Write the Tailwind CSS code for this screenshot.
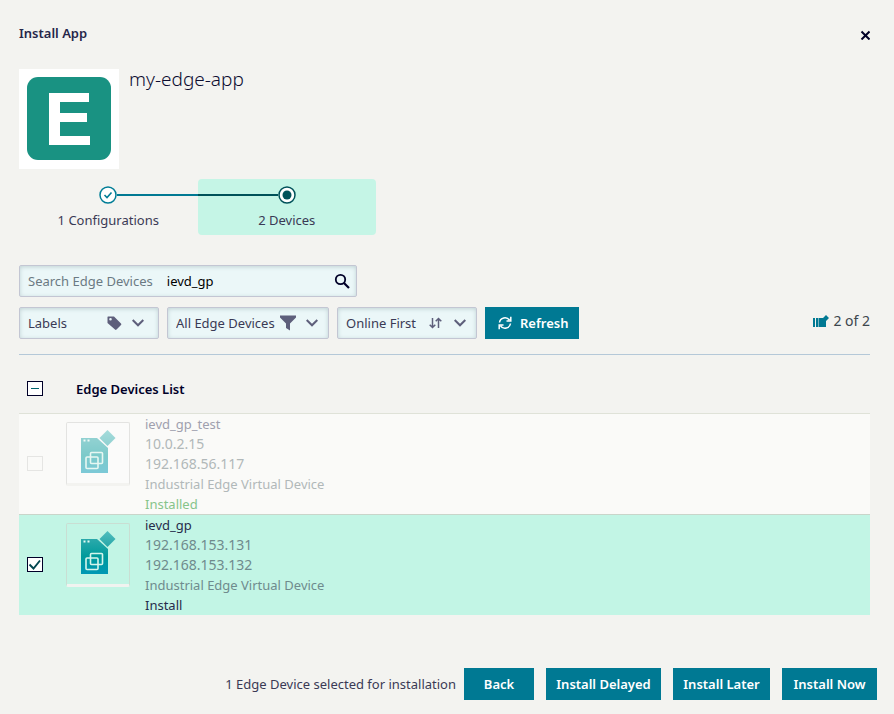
<!DOCTYPE html>
<html lang="en">
<head>
<meta charset="utf-8">
<meta name="viewport" content="width=device-width, initial-scale=1">
<title>Install App</title>
<script src="https://cdn.jsdelivr.net/npm/@tailwindcss/browser@4"></script>
</head>
<body class="min-h-screen bg-[#f3f3f0] font-['Noto_Sans',sans-serif] text-[13px] leading-5 text-[#3a3a55]">
<svg class="absolute size-0" aria-hidden="true">
  <defs>
    <linearGradient id="teal" x1="0" y1="0" x2="0" y2="1">
      <stop offset="0" stop-color="#2ba9ab"/><stop offset=".5" stop-color="#009a9b"/><stop offset="1" stop-color="#0098b5"/>
    </linearGradient>
    <linearGradient id="tip" x1="0" y1="0" x2="0" y2="1">
      <stop offset="0" stop-color="#50bebe"/><stop offset="1" stop-color="#27a6a8"/>
    </linearGradient>
    <symbol id="chevron" viewBox="0 0 12 8"><path d="M.700 1l5.300 5.300L11.300 1" fill="none" stroke="#5e5f7b" stroke-width="2"/></symbol>
    <symbol id="device" viewBox="0 0 36 44">
      <path d="M1 8h16l11 10v25H1z" fill="url(#teal)"/>
      <path d="M27.500 0l8 8-8 8-8-8z" fill="url(#tip)"/>
      <path d="M3.500 9.500h2v2h-2zM7.500 9.500h2v2h-2z" fill="#e6faf4"/>
      <g fill="none" stroke="#d5f5ec" stroke-width="1.600"><rect x="10.500" y="22.500" width="12" height="11" rx="1"/><rect x="6" y="27" width="12" height="11.500" rx="1"/></g>
    </symbol>
  </defs>
</svg>
<main class="flex min-h-screen flex-col">
  <div class="pl-[19px] pr-6">
    <header class="flex items-center justify-between pt-[23px]">
      <h1 class="font-semibold text-[#26264a]">Install App</h1>
      <button type="button" aria-label="Close" class="mt-1 flex size-[10px]"><svg class="size-[10px]" viewBox="0 0 10 10"><path d="M1.500 1.500l8 8M9.500 1.500l-8 8" stroke="#000028" stroke-width="2"/></svg></button>
    </header>

    <section class="mt-[26px] flex items-start gap-[10px]">
      <div class="size-[100px] bg-white p-2">
        <div class="flex h-[83px] w-[84px] items-center justify-center rounded-[11px] bg-[#199282]">
          <svg class="h-[52px] w-[42px]" viewBox="0 0 42 52" role="img" aria-label="App logo"><rect x="1" width="11" height="52" fill="#fff"/><rect x="1" width="40" height="9" fill="#fff"/><rect x="1" y="20" width="38" height="9" fill="#fff"/><rect x="1" y="43" width="41" height="9" fill="#fff"/></svg>
        </div>
      </div>
      <h2 class="text-[19px] leading-5 font-light text-[#0c0c30]">my-edge-app</h2>
    </section>

    <ol class="mt-[10px] grid w-[357px] grid-cols-2 text-center">
      <li class="pt-[7px] pb-[5px]">
        <div class="grid grid-cols-[1fr_18px_1fr] items-center">
          <span></span>
          <svg class="size-[18px]" viewBox="0 0 18 18"><circle cx="9" cy="9" r="8" fill="#fff" stroke="#007d96" stroke-width="1.500"/><path d="M5.500 9l2.500 2.500 4.500-5" fill="none" stroke="#007d96" stroke-width="1.600"/></svg>
          <span class="h-[2px] bg-[#007993]"></span>
        </div>
        <span class="mt-[6px] block">1 Configurations</span>
      </li>
      <li class="rounded-[4px] bg-[#c5f5e6] pt-[7px] pb-[5px]">
        <div class="grid grid-cols-[1fr_18px_1fr] items-center">
          <span class="h-[2px] bg-[#005159]"></span>
          <svg class="size-[18px]" viewBox="0 0 18 18"><circle cx="9" cy="9" r="8" fill="#fff" stroke="#005159" stroke-width="1.500"/><circle cx="9" cy="9" r="4.500" fill="#005159"/></svg>
        </div>
        <span class="mt-[6px] block">2 Devices</span>
      </li>
    </ol>

    <form class="mt-[30px] border-b border-[#b4c8d8] pb-[15px]" onsubmit="return false">
      <div class="flex h-8 w-[338px] items-center rounded-[2px] border border-[#c3c6d3] bg-[#ebf7f8] pr-[6px] pl-2 shadow-[inset_0_1px_4px_#bfd2d4]">
        <label for="search" class="shrink-0 text-[#6b7a83]">Search Edge Devices</label>
        <input id="search" type="text" value="ievd_gp" class="ml-[14px] min-w-0 flex-1 bg-transparent text-black outline-none">
        <button type="submit" aria-label="Search" class="shrink-0"><svg class="size-4" viewBox="0 0 16 16"><circle cx="6.500" cy="6.500" r="4.700" fill="none" stroke="#000028" stroke-width="1.800"/><path d="M10 10l5 5" stroke="#000028" stroke-width="2.200"/></svg></button>
      </div>
      <div class="mt-[10px] flex items-center gap-2">
        <div class="grid h-8 w-[140px] items-center">
          <select aria-label="Labels" class="h-8 w-full appearance-none rounded-[2px] border border-[#c3c6d3] bg-[#ebf7f8] pl-2 shadow-[inset_0_1px_4px_#bfd2d4] [grid-area:1/1]"><option>Labels</option></select>
          <span class="pointer-events-none flex items-center gap-[10px] justify-self-end pr-[15px] [grid-area:1/1]">
            <svg class="size-4" viewBox="0 0 16 16"><path fill="#5e5f7b" fill-rule="evenodd" d="M2 1.500h6L15 8.500q.8.800 0 1.500l-4.500 4.500q-.8.800-1.500 0L1.500 8V2q0-.5.500-.5zM4.500 3a1.300 1.300 0 1 0 0 2.600 1.300 1.300 0 0 0 0-2.600z"/></svg>
            <svg class="h-2 w-3"><use href="#chevron"/></svg>
          </span>
        </div>
        <div class="grid h-8 w-[162px] items-center">
          <select aria-label="Device filter" class="h-8 w-full appearance-none rounded-[2px] border border-[#c3c6d3] bg-[#ebf7f8] pl-2 shadow-[inset_0_1px_4px_#bfd2d4] [grid-area:1/1]"><option>All Edge Devices</option></select>
          <span class="pointer-events-none flex items-center gap-[10px] justify-self-end pr-[11px] [grid-area:1/1]">
            <svg class="size-4" viewBox="0 0 16 16"><path fill="#5e5f7b" d="M0 .5h16v2l-6 6V15.500l-4-2.500V8.500l-6-6z"/></svg>
            <svg class="h-2 w-3"><use href="#chevron"/></svg>
          </span>
        </div>
        <div class="grid h-8 w-[140px] items-center">
          <select aria-label="Sort order" class="h-8 w-full appearance-none rounded-[2px] border border-[#c3c6d3] bg-[#ebf7f8] pl-2 shadow-[inset_0_1px_4px_#bfd2d4] [grid-area:1/1]"><option>Online First</option></select>
          <span class="pointer-events-none flex items-center gap-3 justify-self-end pr-[11px] [grid-area:1/1]">
            <svg class="h-3 w-[13px]" viewBox="0 0 13 12"><path d="M3.500 1v9.500M.7 7.700l2.800 2.800 2.800-2.800M9.500 11V1.500M6.700 4.300l2.800-2.800 2.800 2.800" fill="none" stroke="#5e5f7b" stroke-width="1.500"/></svg>
            <svg class="h-2 w-3"><use href="#chevron"/></svg>
          </span>
        </div>
        <button type="button" class="flex h-8 w-[94px] items-center gap-2 bg-[#007993] pl-[13px] font-semibold text-white">
          <svg class="size-[14px]" viewBox="0 0 14 14"><path d="M1.500 6.500a5.500 5.500 0 0 1 10-2.300M12.500 7.500a5.500 5.500 0 0 1-10 2.300M12.800.8v4.300H8.500M1.200 13.200V8.900h4.300" fill="none" stroke="#fff" stroke-width="1.500"/></svg>Refresh</button>
        <div class="ml-auto flex items-center gap-1 pb-1 text-[14px] leading-5 text-[#3c464d]">
          <svg class="h-[12px] w-4" viewBox="0 0 16 12"><path fill="#007993" d="M0 3h2v9H0zM3 3h2v9H3zM5.500 3H10l3 3v6H5.500zM13 0l3 3-3 3-3-3z"/></svg>2 of 2</div>
      </div>
    </form>

    <table class="mt-4 w-full border-collapse text-left">
      <thead>
        <tr class="h-[42px] align-top">
          <th class="w-[47px] pt-[10px] pl-2"><span class="grid h-[15px] w-4"><input type="checkbox" aria-label="Select all devices" class="m-0 h-[15px] w-4 appearance-none border border-[#000028] bg-white [grid-area:1/1]"><svg class="pointer-events-none h-[15px] w-4 [grid-area:1/1]" viewBox="0 0 16 15"><path d="M4 7.500h8" stroke="#00646e"/></svg></span></th>
          <th colspan="2" class="pt-2 pl-[10px] font-semibold text-[#000028]">Edge Devices List</th>
        </tr>
      </thead>
      <tbody>
        <tr class="h-[101px] border-t border-[#dfe2d8] bg-[#fafaf8]">
          <td class="pl-2"><input type="checkbox" disabled aria-label="ievd_gp_test" class="m-0 block h-[15px] w-4 appearance-none border border-[#e5e5e3]"></td>
          <td class="w-[79px] pt-2 align-top"><span class="flex size-16 items-center justify-center rounded-[2px] border border-b-[3px] border-[#e3e3e1] border-b-[#f3f3f0] bg-[#fbfbfa] pb-[2px]"><svg class="h-11 w-9 opacity-50"><use href="#device"/></svg></span></td>
          <td class="align-top text-[#b1b8b9]"><div class="text-[#9fa0ae]">ievd_gp_test</div><div class="text-[14px] leading-5">10.0.2.15</div><div class="text-[14px] leading-5">192.168.56.117</div><div>Industrial Edge Virtual Device</div><div class="text-[#86c48a]">Installed</div></td>
        </tr>
        <tr class="h-[101px] border-t border-[#c9d5ca] bg-[#c2f5e5]">
          <td class="pl-2"><span class="grid h-[15px] w-4"><input type="checkbox" checked aria-label="ievd_gp" class="m-0 h-[15px] w-4 appearance-none border border-[#000028] bg-white [grid-area:1/1]"><svg class="pointer-events-none h-[15px] w-4 [grid-area:1/1]" viewBox="0 0 16 15"><path d="M2.500 7.500l4 4L13 3.500" fill="none" stroke="#00464f" stroke-width="1.900"/></svg></span></td>
          <td class="pt-2 align-top"><span class="flex size-16 items-center justify-center rounded-[2px] border border-b-[3px] border-[#c9ded3] border-b-[#f1f3f0] pb-[2px]"><svg class="h-11 w-9"><use href="#device"/></svg></span></td>
          <td class="align-top text-[#6f8b8d]"><div class="text-[#262c4b]">ievd_gp</div><div class="text-[14px] leading-5">192.168.153.131</div><div class="text-[14px] leading-5">192.168.153.132</div><div>Industrial Edge Virtual Device</div><div class="text-[#262c4b]">Install</div></td>
        </tr>
      </tbody>
    </table>
  </div>

  <footer class="mt-auto flex items-center justify-end gap-3 pr-[17px] pb-[14px]">
    <p class="-mr-1">1 Edge Device selected for installation</p>
    <button type="button" class="h-8 w-[70px] bg-[#007993] font-semibold text-white">Back</button>
    <button type="button" class="h-8 w-[115px] bg-[#007993] font-semibold text-white">Install Delayed</button>
    <button type="button" class="h-8 w-[97px] bg-[#007993] font-semibold text-white">Install Later</button>
    <button type="button" class="h-8 w-[95px] bg-[#007993] font-semibold text-white">Install Now</button>
  </footer>
</main>
</body>
</html>
